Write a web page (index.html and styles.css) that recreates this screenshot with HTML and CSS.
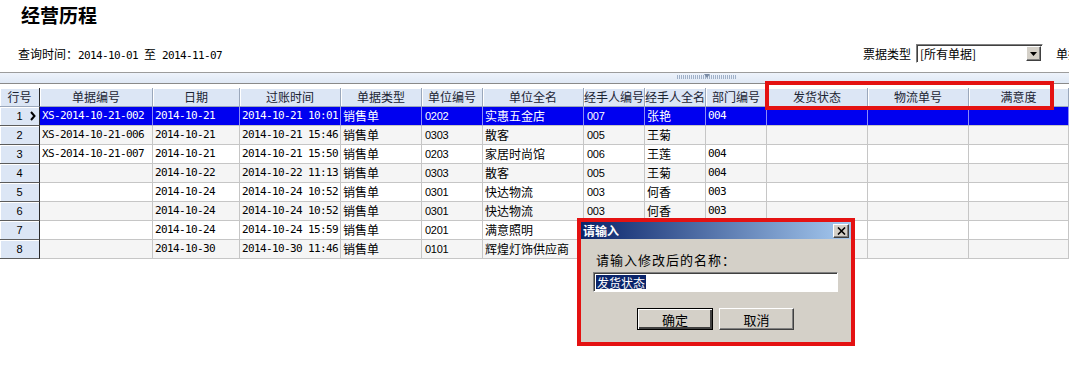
FILE: index.html
```html
<!DOCTYPE html>
<html lang="zh-CN">
<head>
  <meta charset="UTF-8">
  <title>经营历程</title>
  <link rel="stylesheet" href="styles.css">
</head>
<body>
  <div class="page">
    <h1 class="title">经营历程</h1>

    <div class="query">
      <div class="range">查询时间：<span class="mono">2014-10-01</span><span class="to">至</span><span class="mono">2014-11-07</span></div>
      <div class="filter">
        <span>票据类型</span>
        <div class="select">
          <span>[所有单据]</span>
          <span class="drop"><svg width="7" height="4" viewBox="0 0 7 4"><path d="M0 0H7L3.5 4Z" fill="#000"/></svg></span>
        </div>
        <span class="cut">单据</span>
      </div>
    </div>

    <div class="band"><div class="grip"><span class="grip-arrow"></span></div></div>

    <div class="grid">
      <div class="row head">
        <div class="cell rh">行号</div>
        <div class="cell">单据编号</div>
        <div class="cell">日期</div>
        <div class="cell">过账时间</div>
        <div class="cell">单据类型</div>
        <div class="cell">单位编号</div>
        <div class="cell">单位全名</div>
        <div class="cell">经手人编号</div>
        <div class="cell">经手人全名</div>
        <div class="cell">部门编号</div>
        <div class="cell">发货状态</div>
        <div class="cell">物流单号</div>
        <div class="cell">满意度</div>
      </div>

      <div class="row sel">
        <div class="cell rh">1<svg class="ptr" width="6" height="10" viewBox="0 0 6 10"><path d="M1 1L4.5 5L1 9" fill="none" stroke="#000" stroke-width="2"/></svg></div>
        <div class="cell m">XS-2014-10-21-002</div>
        <div class="cell m">2014-10-21</div>
        <div class="cell m">2014-10-21 10:01</div>
        <div class="cell">销售单</div>
        <div class="cell n">0202</div>
        <div class="cell">实惠五金店</div>
        <div class="cell n">007</div>
        <div class="cell">张艳</div>
        <div class="cell m">004</div>
        <div class="cell"></div>
        <div class="cell"></div>
        <div class="cell"></div>
      </div>

      <div class="row even">
        <div class="cell rh">2</div>
        <div class="cell m">XS-2014-10-21-006</div>
        <div class="cell m">2014-10-21</div>
        <div class="cell m">2014-10-21 15:46</div>
        <div class="cell">销售单</div>
        <div class="cell n">0303</div>
        <div class="cell">散客</div>
        <div class="cell n">005</div>
        <div class="cell">王菊</div>
        <div class="cell m"></div>
        <div class="cell"></div>
        <div class="cell"></div>
        <div class="cell"></div>
      </div>

      <div class="row">
        <div class="cell rh">3</div>
        <div class="cell m">XS-2014-10-21-007</div>
        <div class="cell m">2014-10-21</div>
        <div class="cell m">2014-10-21 15:50</div>
        <div class="cell">销售单</div>
        <div class="cell n">0203</div>
        <div class="cell">家居时尚馆</div>
        <div class="cell n">006</div>
        <div class="cell">王莲</div>
        <div class="cell m">004</div>
        <div class="cell"></div>
        <div class="cell"></div>
        <div class="cell"></div>
      </div>

      <div class="row even">
        <div class="cell rh">4</div>
        <div class="cell m"></div>
        <div class="cell m">2014-10-22</div>
        <div class="cell m">2014-10-22 11:13</div>
        <div class="cell">销售单</div>
        <div class="cell n">0303</div>
        <div class="cell">散客</div>
        <div class="cell n">005</div>
        <div class="cell">王菊</div>
        <div class="cell m">004</div>
        <div class="cell"></div>
        <div class="cell"></div>
        <div class="cell"></div>
      </div>

      <div class="row">
        <div class="cell rh">5</div>
        <div class="cell m"></div>
        <div class="cell m">2014-10-24</div>
        <div class="cell m">2014-10-24 10:52</div>
        <div class="cell">销售单</div>
        <div class="cell n">0301</div>
        <div class="cell">快达物流</div>
        <div class="cell n">003</div>
        <div class="cell">何香</div>
        <div class="cell m">003</div>
        <div class="cell"></div>
        <div class="cell"></div>
        <div class="cell"></div>
      </div>

      <div class="row even">
        <div class="cell rh">6</div>
        <div class="cell m"></div>
        <div class="cell m">2014-10-24</div>
        <div class="cell m">2014-10-24 10:52</div>
        <div class="cell">销售单</div>
        <div class="cell n">0301</div>
        <div class="cell">快达物流</div>
        <div class="cell n">003</div>
        <div class="cell">何香</div>
        <div class="cell m">003</div>
        <div class="cell"></div>
        <div class="cell"></div>
        <div class="cell"></div>
      </div>

      <div class="row">
        <div class="cell rh">7</div>
        <div class="cell m"></div>
        <div class="cell m">2014-10-24</div>
        <div class="cell m">2014-10-24 15:59</div>
        <div class="cell">销售单</div>
        <div class="cell n">0201</div>
        <div class="cell">满意照明</div>
        <div class="cell n"></div>
        <div class="cell"></div>
        <div class="cell m"></div>
        <div class="cell"></div>
        <div class="cell"></div>
        <div class="cell"></div>
      </div>

      <div class="row even">
        <div class="cell rh">8</div>
        <div class="cell m"></div>
        <div class="cell m">2014-10-30</div>
        <div class="cell m">2014-10-30 11:46</div>
        <div class="cell">销售单</div>
        <div class="cell n">0101</div>
        <div class="cell">辉煌灯饰供应商</div>
        <div class="cell n"></div>
        <div class="cell"></div>
        <div class="cell m"></div>
        <div class="cell"></div>
        <div class="cell"></div>
        <div class="cell"></div>
      </div>
    </div>

    <!-- red markers drawn over the grid -->
    <div class="mark mark-cols"></div>

    <div class="dialog">
      <div class="win">
        <div class="caption">
          <span>请输入</span>
          <span class="close"><svg width="9" height="8" viewBox="0 0 9 8"><path d="M1 0.5L8 7.5M8 0.5L1 7.5" stroke="#000" stroke-width="1.6"/></svg></span>
        </div>
        <div class="win-body">
          <div class="prompt">请输入修改后的名称：</div>
          <div class="input"><span class="picked">发货状态</span></div>
          <div class="buttons">
            <div class="btn btn-default"><span>确定</span></div>
            <div class="btn"><span>取消</span></div>
          </div>
        </div>
      </div>
    </div>
  </div>
</body>
</html>
```

FILE: styles.css
```css
* {
  box-sizing: border-box;
}

body {
  margin: 0;
  background-color: #fff;
  color: #000;
  font-family: "Noto Sans CJK SC", sans-serif;
  font-size: 12px;
}

.page {
  position: relative;
  width: 1069px;
  height: 379px;
  overflow: hidden;
}

.title {
  margin: 0;
  padding: 4px 0 0 21px;
  font-size: 19px;
  line-height: 22px;
  font-weight: bold;
}

.mono,
.m {
  font-family: "DejaVu Sans Mono", monospace;
  font-size: 11px;
  letter-spacing: -0.62px;
}

.query {
  display: flex;
  align-items: center;
  height: 20px;
  margin-top: 17px;
  white-space: nowrap;
}

.range {
  flex-shrink: 0;
  width: 863px;
  padding-left: 18px;
}

.to {
  margin: 0 6px;
}

.filter {
  display: flex;
  align-items: center;
  flex-shrink: 0;
  gap: 5px;
}

.select {
  display: flex;
  align-items: center;
  justify-content: space-between;
  width: 127px;
  height: 19px;
  padding: 0 1px 0 3px;
  border: 1px solid;
  border-color: #808080 #fff #fff #808080;
  box-shadow: inset 1px 1px #404040;
  background-color: #fff;
}

.drop {
  display: flex;
  align-items: center;
  justify-content: center;
  width: 15px;
  height: 15px;
  margin-top: 1px;
  background-color: #d4d0c8;
  border: 1px solid;
  border-color: #fff #404040 #404040 #fff;
  box-shadow: inset -1px -1px #808080;
}

.cut {
  margin-left: 8px;
}

.band {
  height: 12px;
  margin-top: 9px;
  border-top: 1px solid #9c9c9c;
  border-bottom: 1px solid #8a8a8a;
  background: linear-gradient(#eef3fb, #dfe8f5);
}

.grip {
  position: relative;
  width: 60px;
  height: 4px;
  margin: 2px 0 0 677px;
  background: repeating-linear-gradient(90deg, #9fb0c8 0 1px, transparent 1px 2px);
}

.grip-arrow {
  position: absolute;
  left: 27px;
  top: -1px;
  border: 3px solid transparent;
  border-top: 4px solid #7c8ca4;
}

.grid {
  margin-top: 4px;
}

.row {
  display: grid;
  grid-template-columns: 40px 113px 87px 101px 81px 61px 101px 61px 61px 61px 101px 101px 100px;
  height: 19px;
}

.cell {
  padding: 0 2px;
  border-right: 1px solid #c6c6c6;
  border-bottom: 1px solid #c6c6c6;
  line-height: 18px;
  white-space: nowrap;
  overflow: hidden;
}

.n {
  padding-left: 3px;
  font-family: "Liberation Sans", sans-serif;
  font-size: 11px;
  letter-spacing: -0.3px;
}

.even .cell {
  background-color: #f5f5f5;
}

.head .cell {
  padding: 0;
  text-align: center;
  background-color: #dce6f5;
  border-color: #9aa7bb;
  box-shadow: inset 1px 1px #fff;
  color: #1b2433;
}

.sel .cell {
  background-color: #0000f0;
  border-right-color: #8c8cf6;
  color: #fff;
}

.row .rh {
  position: relative;
  padding: 0;
  text-align: center;
  background-color: #dce6f5;
  border-right: 1px solid #2a2a2a;
  border-bottom: 1px solid #5c5c5c;
  box-shadow: inset 1px 1px #fff;
  color: #000;
  font-family: "Liberation Sans", sans-serif;
  font-size: 11px;
}

.head .rh {
  font-family: "Noto Sans CJK SC", sans-serif;
  font-size: 12px;
  border-bottom-color: #9aa7bb;
  color: #1b2433;
}

.ptr {
  position: absolute;
  left: 30px;
  top: 4px;
}

.mark {
  position: absolute;
  border: 4px solid #e41212;
}

.mark-cols {
  left: 765px;
  top: 81px;
  width: 289px;
  height: 29px;
}

.dialog {
  position: absolute;
  left: 577px;
  top: 218px;
  width: 278px;
  height: 128px;
  border: 4px solid #e41212;
}

.win {
  display: flex;
  flex-direction: column;
  height: 100%;
  background-color: #d4d0c8;
}

.caption {
  display: flex;
  align-items: center;
  justify-content: space-between;
  height: 17px;
  padding: 0 2px;
  background: linear-gradient(90deg, #0a246a, #a6caf0);
  color: #fff;
  font-weight: bold;
  font-size: 12px;
}

.close {
  display: flex;
  align-items: center;
  justify-content: center;
  width: 16px;
  height: 14px;
  background-color: #d4d0c8;
  border: 1px solid;
  border-color: #fff #404040 #404040 #fff;
  box-shadow: inset -1px -1px #808080;
}

.win-body {
  padding: 14px 13px 12px 12px;
}

.prompt {
  padding-left: 3px;
  line-height: 14px;
  font-size: 13px;
  letter-spacing: 1px;
}

.input {
  display: flex;
  height: 20px;
  margin-top: 5px;
  padding: 2px;
  border: 1px solid;
  border-color: #808080 #fff #fff #808080;
  box-shadow: inset 1px 1px #404040;
  background-color: #fff;
}

.picked {
  padding: 0 1px;
  background-color: #0a246a;
  color: #fff;
  line-height: 15px;
  font-size: 12px;
}

.buttons {
  display: flex;
  justify-content: center;
  gap: 6px;
  margin-top: 16px;
}

.btn {
  display: flex;
  align-items: center;
  justify-content: center;
  width: 75px;
  height: 22px;
  background-color: #d4d0c8;
  border: 1px solid;
  border-color: #fff #404040 #404040 #fff;
  box-shadow: inset -1px -1px #808080;
  font-size: 13px;
}

.btn-default {
  width: 76px;
  border: 1px solid #000;
  box-shadow: inset 1px 1px #fff, inset -2px -2px #404040, inset -1px -1px #808080;
}
```
